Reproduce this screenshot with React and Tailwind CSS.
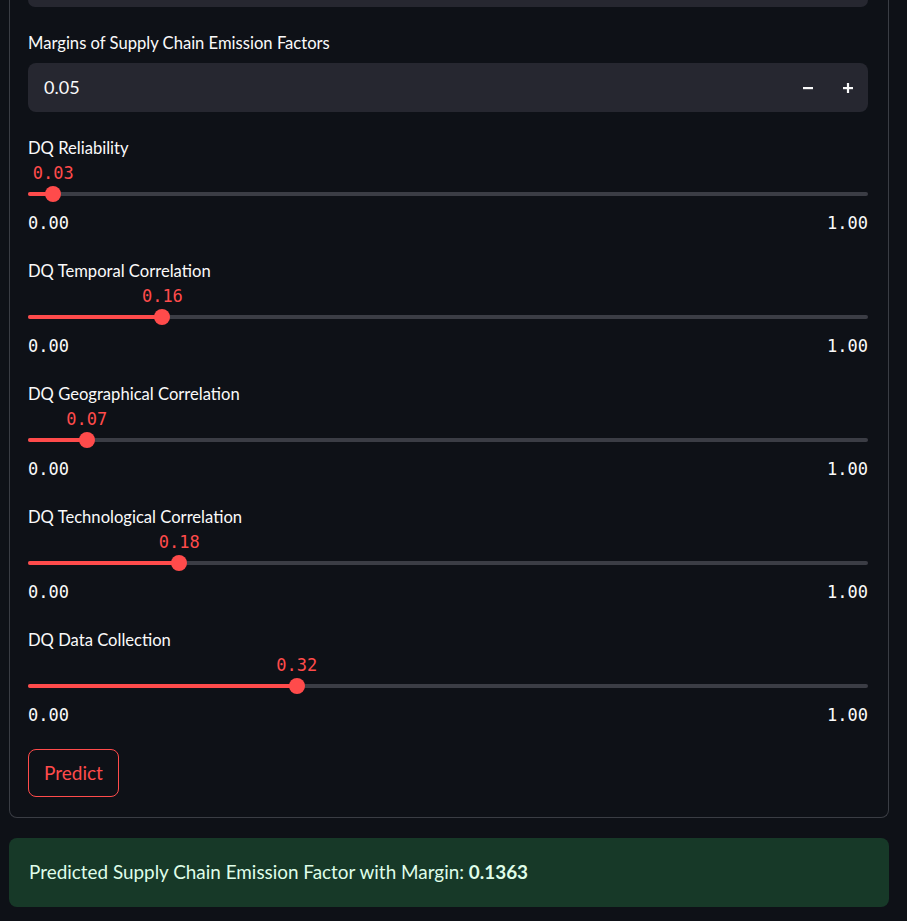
import React from 'react'

const sliders = [
  { label: 'DQ Reliability', value: 0.03 },
  { label: 'DQ Temporal Correlation', value: 0.16 },
  { label: 'DQ Geographical Correlation', value: 0.07 },
  { label: 'DQ Technological Correlation', value: 0.18 },
  { label: 'DQ Data Collection', value: 0.32 },
]

const sans = { fontFamily: 'Lato, "Noto Sans", sans-serif' }
const mono = 'font-["DejaVu_Sans_Mono",monospace]'

function Slider({ label, value }) {
  const pct = value * 100
  return (
    <div className="mt-[26px] pb-[2px]">
      <div className="h-5 text-[16.6px] leading-5 text-[#fafafa]">{label}</div>
      <div className="relative mt-[5px] h-5">
        <span
          className={`absolute top-0 -translate-x-1/2 text-[17px] leading-5 text-[#ff4b4b] ${mono}`}
          style={{ left: pct + '%' }}
        >
          {value.toFixed(2)}
        </span>
      </div>
      <div className="relative mt-[3px] h-4">
        <div className="absolute left-0 right-0 top-[6px] h-1 rounded-full bg-[#3b3d45]" />
        <div
          className="absolute left-0 top-[6px] h-1 rounded-full bg-[#ff4b4b]"
          style={{ width: pct + '%' }}
        />
        <div
          className="absolute top-0 h-4 w-4 -translate-x-1/2 rounded-full bg-[#ff4b4b]"
          style={{ left: pct + '%' }}
        />
      </div>
      <div className={`mt-[11px] flex justify-between text-[17px] leading-5 text-[#fafafa] ${mono}`}>
        <span>0.00</span>
        <span>1.00</span>
      </div>
    </div>
  )
}

export default function App() {
  return (
    <div className="min-h-[921px] bg-[#0e1117] pl-[9px] pr-[18px]" style={sans}>
      <div className="rounded-b-lg border-x border-b border-[#3a3d44] pl-[18px] pr-[20px] pb-[20px]">
        <div className="h-[7px] rounded-b-lg bg-[#262730]" />

        <div className="mt-[26px] h-5 text-[16.6px] leading-5 text-[#fafafa]">
          Margins of Supply Chain Emission Factors
        </div>
        <div className="mt-[10px] flex h-[49px] items-center gap-2 rounded-lg bg-[#262730] pl-4 pr-1">
          <span className="flex-1 text-[18px] text-[#fafafa]">0.05</span>
          <button className="flex h-8 w-8 items-center justify-center text-[#fafafa]">
            <svg width="12" height="12" viewBox="0 0 12 12">
              <rect x="1" y="5" width="10" height="2.2" fill="currentColor" />
            </svg>
          </button>
          <button className="flex h-8 w-8 items-center justify-center text-[#fafafa]">
            <svg width="12" height="12" viewBox="0 0 12 12">
              <rect x="1" y="5" width="10" height="2.2" fill="currentColor" />
              <rect x="4.9" y="1" width="2.2" height="10" fill="currentColor" />
            </svg>
          </button>
        </div>

        {sliders.map((s, i) => (
          <div key={s.label} className={i === 0 ? '' : 'mt-[2px]'}>
            <Slider label={s.label} value={s.value} />
          </div>
        ))}

        <button className="mt-[22px] flex h-[48px] items-center rounded-lg border border-[#ff4b4b] px-[15px] text-[19px] text-[#ff4b4b]">
          Predict
        </button>
      </div>

      <div className="mt-[20px] flex h-[69px] items-center rounded-lg bg-[#173928] px-5 text-[18.9px] text-[#dffde9]">
        <span>
          Predicted Supply Chain Emission Factor with Margin: <b className="font-bold">0.1363</b>
        </span>
      </div>
    </div>
  )
}
